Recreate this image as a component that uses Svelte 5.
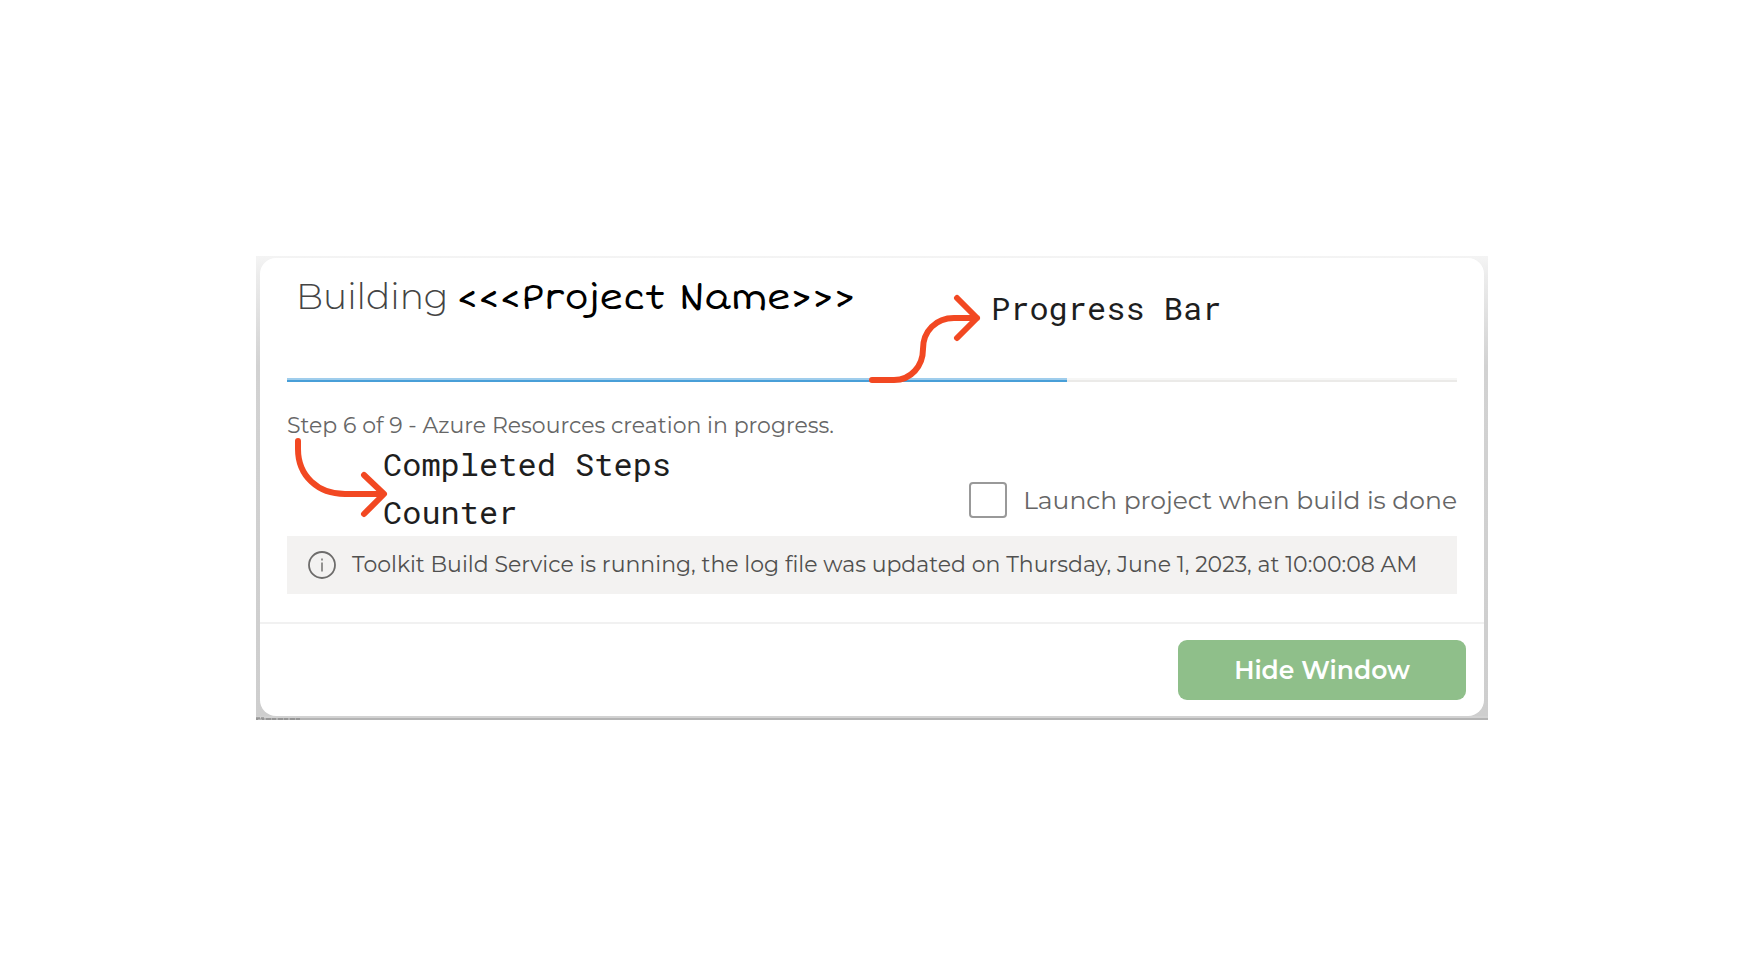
<script>
  const step = 6;
  const total = 9;
  let launch = $state(false);
  let hidden = $state(false);
</script>

<main class="page">
  {#if !hidden}
    <div class="frame">
      <svg class="remnant" width="48" height="3" viewBox="0 0 48 3" aria-hidden="true">
        <path d="M1 3V1H7V3M10 2H46" fill="none" stroke="#777" stroke-width="2" stroke-dasharray="5 1 4 2" opacity=".5" />
      </svg>
      <section class="card" aria-labelledby="title">
        <div class="body">
          <h1 id="title"><span class="verb">Building</span><span class="project">&lt;&lt;&lt;Project Name&gt;&gt;&gt;</span></h1>
          <div class="track" role="progressbar" aria-label="Build progress" aria-valuemin="0" aria-valuemax={total} aria-valuenow={step}>
            <div class="fill" style="width: {(step / total) * 100}%"></div>
          </div>
          <p class="step">Step {step} of {total} - Azure Resources creation in progress.</p>
          <label class="launch">
            <input type="checkbox" bind:checked={launch} />
            <span>Launch project when build is done</span>
          </label>
          <div class="notice">
            <svg width="28" height="28" viewBox="0 0 28 28" fill="none" stroke="#6d6c6b" aria-hidden="true">
              <circle cx="14" cy="14" r="13" stroke-width="1.8" />
              <path d="M14 11.5V20.5M14 7.5V9.5" stroke-width="2" stroke="#929190" />
            </svg>
            <span>Toolkit Build Service is running, the log file was updated on Thursday, June 1, 2023, at 10:00:08 AM</span>
          </div>
        </div>
        <footer>
          <button type="button" onclick={() => (hidden = true)}>Hide Window</button>
        </footer>
      </section>

      <svg class="arrow bar-arrow" width="120" height="96" viewBox="0 0 120 96" aria-hidden="true">
        <path d="M11 88H33C50 88 62 74 62 57C62 39 75 26 93 26H116M96 6L116 26L96 46" />
      </svg>
      <span class="note bar-note">Progress Bar</span>
      <svg class="arrow step-arrow" width="104" height="88" viewBox="0 0 104 88" aria-hidden="true">
        <path d="M10 8V16C10 43 30 61 57 61H95M76 42L96 61L76 81" />
      </svg>
      <span class="note step-note">Completed Steps<br />Counter</span>
    </div>
  {/if}
</main>

<style>
  :global(body) {
    margin: 0;
    background: #fff;
  }
  .page {
    min-height: 100vh;
    display: flex;
    align-items: center;
    justify-content: center;
    font-family: Montserrat, Inter, "Open Sans", sans-serif;
    color: #666;
  }
  .frame {
    position: relative;
    box-sizing: border-box;
    width: 100%;
    max-width: 1232px;
    padding: 2px 4px 4px;
    background:
      linear-gradient(#d2d2d2 50%, #b4b4b4 50%) bottom / 100% 4px no-repeat,
      linear-gradient(#f4f4f4 0, #ececec 20px, #d2d2d2 110px, #cecece 100%);
  }
  .remnant {
    position: absolute;
    left: 0;
    bottom: 0;
  }
  .card {
    position: relative;
    background: #fff;
    border-radius: 16px;
  }
  .body {
    padding: 14px 27px 28px;
  }
  h1 {
    display: flex;
    align-items: baseline;
    gap: 8px;
    height: 48px;
    margin: 0 0 58px 9px;
    color: #444;
    font-size: 36px;
    line-height: 48px;
    font-weight: 300;
  }
  .project {
    color: #000;
    font-family: "Short Stack", "Shantell Sans", "Playpen Sans", Inter, sans-serif;
    font-size: 36px;
    font-weight: 400;
  }
  .track {
    height: 4px;
    background: linear-gradient(#f6f6f5 50%, #ebeae8 50%);
  }
  .fill {
    height: 4px;
    background: linear-gradient(#9fcdec 50%, #489fd8 50%);
  }
  .step {
    margin: 29px 0 41px;
    font-size: 22px;
    line-height: 30px;
  }
  .launch {
    display: flex;
    align-items: center;
    justify-content: flex-end;
    gap: 16px;
    margin-bottom: 18px;
    font-size: 25px;
    line-height: 36px;
  }
  input {
    appearance: none;
    width: 38px;
    height: 36px;
    margin: 0;
    border: 2px solid #999;
    border-radius: 4px;
    background: #fff;
  }
  input:checked {
    background: #489fd8;
  }
  .notice {
    display: flex;
    align-items: center;
    gap: 16px;
    padding: 14px 21px;
    background: #f3f2f1;
    color: #50504f;
    font-size: 22px;
    line-height: 30px;
  }
  .notice svg {
    flex: none;
  }
  footer {
    display: flex;
    justify-content: flex-end;
    padding: 16px 18px;
    border-top: 2px solid #f1f1f1;
  }
  button {
    width: 288px;
    height: 60px;
    border: 0;
    border-radius: 9px;
    background: #8fbf8a;
    color: #fff;
    font: 600 25px/36px Montserrat, Inter, sans-serif;
  }
  .arrow {
    position: absolute;
    fill: none;
    stroke: #f24822;
    stroke-width: 6;
    stroke-linecap: round;
    stroke-linejoin: round;
  }
  .bar-arrow {
    left: 605px;
    top: 36px;
  }
  .step-arrow {
    left: 32px;
    top: 177px;
  }
  .note {
    position: absolute;
    color: #1e1e1e;
    font: 32px/48px "Roboto Mono", "DejaVu Sans Mono", monospace;
    white-space: nowrap;
  }
  .bar-note {
    left: 735px;
    top: 28px;
  }
  .step-note {
    left: 127px;
    top: 184px;
  }
</style>
